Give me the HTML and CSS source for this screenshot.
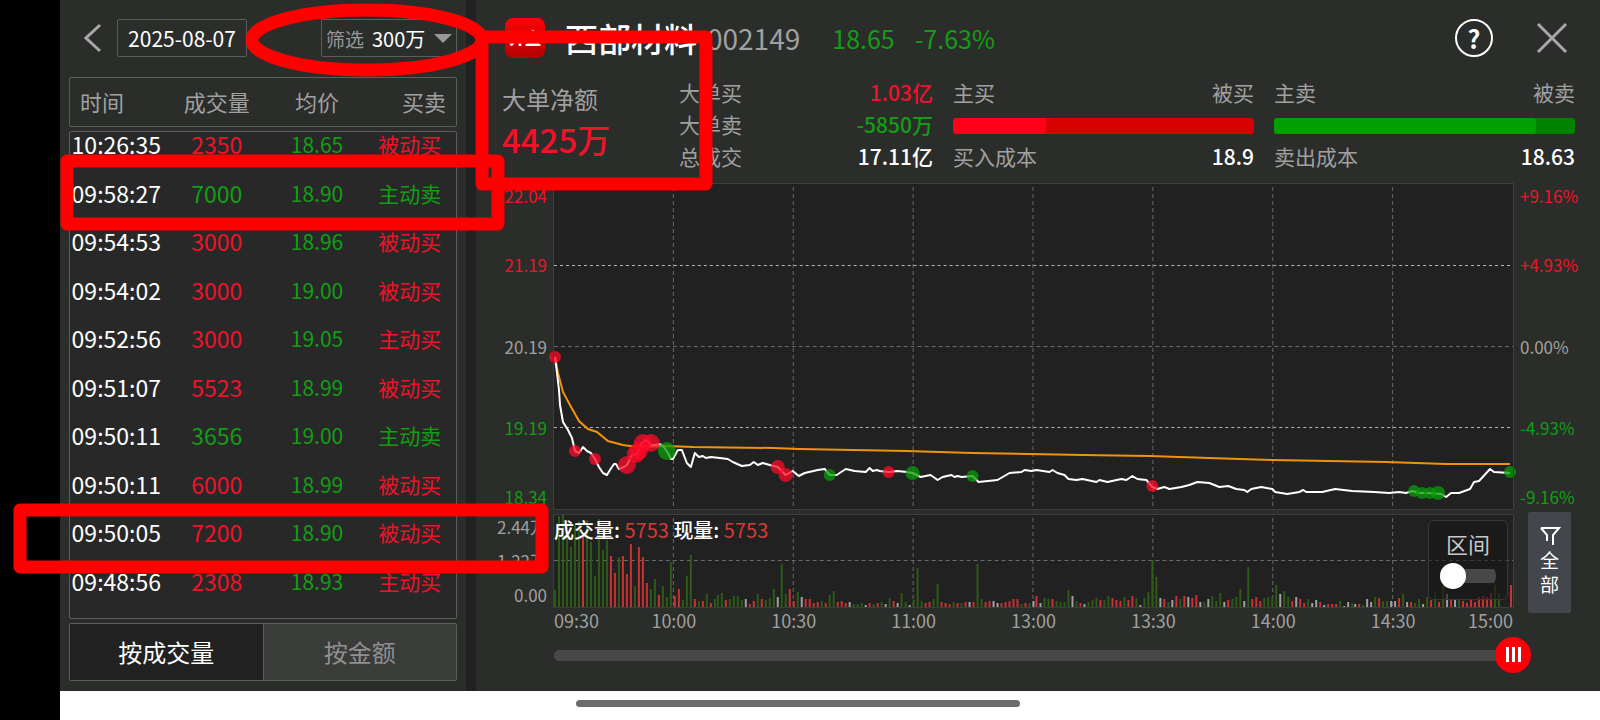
FILE: index.html
```html
<!DOCTYPE html>
<html lang="zh-CN">
<head>
    <meta charset="UTF-8">
    <meta name="viewport" content="width=device-width, initial-scale=1.0">
    <title>西部材料 002149</title>
    <link rel="stylesheet" href="styles.css">
</head>
<body>
    <div class="screen">
        <div class="app">
            <aside class="orders">
                <div class="toolbar">
                    <button class="icon-btn back" aria-label="返回">
                        <svg width="18" height="30" viewBox="0 0 18 30"><path d="M16 2L2 15l14 13"/></svg>
                    </button>
                    <button class="date">2025-08-07</button>
                    <div class="filter">
                        <label for="amount">筛选</label>
                        <select id="amount">
                            <option>300万</option>
                            <option>100万</option>
                        </select>
                        <span class="caret"></span>
                    </div>
                </div>

                <table class="trades">
                    <thead>
                        <tr><th>时间</th><th>成交量</th><th>均价</th><th>买卖</th></tr>
                    </thead>
                    <tbody>
                        <tr><td>10:26:35</td><td class="up">2350</td><td class="down">18.65</td><td class="up">被动买</td></tr>
                        <tr><td>09:58:27</td><td class="down">7000</td><td class="down">18.90</td><td class="down">主动卖</td></tr>
                        <tr><td>09:54:53</td><td class="up">3000</td><td class="down">18.96</td><td class="up">被动买</td></tr>
                        <tr><td>09:54:02</td><td class="up">3000</td><td class="down">19.00</td><td class="up">被动买</td></tr>
                        <tr><td>09:52:56</td><td class="up">3000</td><td class="down">19.05</td><td class="up">主动买</td></tr>
                        <tr><td>09:51:07</td><td class="up">5523</td><td class="down">18.99</td><td class="up">被动买</td></tr>
                        <tr><td>09:50:11</td><td class="down">3656</td><td class="down">19.00</td><td class="down">主动卖</td></tr>
                        <tr><td>09:50:11</td><td class="up">6000</td><td class="down">18.99</td><td class="up">被动买</td></tr>
                        <tr><td>09:50:05</td><td class="up">7200</td><td class="down">18.90</td><td class="up">被动买</td></tr>
                        <tr><td>09:48:56</td><td class="up">2308</td><td class="down">18.93</td><td class="up">主动买</td></tr>
                    </tbody>
                </table>

                <div class="tabs">
                    <button class="active">按成交量</button>
                    <button>按金额</button>
                </div>
            </aside>

            <main class="detail">
                <header class="title">
                    <span class="logo">开盘</span>
                    <h1>西部材料</h1>
                    <span class="code">002149</span>
                    <span class="quote down">18.65</span>
                    <span class="quote down">-7.63%</span>
                    <button class="icon-btn help" aria-label="帮助">?</button>
                    <button class="icon-btn close" aria-label="关闭">
                        <svg width="32" height="32" viewBox="0 0 32 32"><path d="M2 2l28 28M30 2L2 30"/></svg>
                    </button>
                </header>

                <section class="stats">
                    <div class="net">
                        <span>大单净额</span>
                        <strong class="up">4425万</strong>
                    </div>
                    <div class="group">
                        <p><span>大单买</span><b class="up">1.03亿</b></p>
                        <p><span>大单卖</span><b class="down">-5850万</b></p>
                        <p><span>总成交</span><b>17.11亿</b></p>
                    </div>
                    <div class="group">
                        <p><span>主买</span><span>被买</span></p>
                        <div class="ratio buy"><i style="width: 31%"></i></div>
                        <p><span>买入成本</span><b>18.9</b></p>
                    </div>
                    <div class="group">
                        <p><span>主卖</span><span>被卖</span></p>
                        <div class="ratio sell"><i style="width: 87%"></i></div>
                        <p><span>卖出成本</span><b>18.63</b></p>
                    </div>
                </section>

                <section class="chart">
                    <div class="axis price-axis">
                        <span class="up">22.04</span>
                        <span class="up">21.19</span>
                        <span>20.19</span>
                        <span class="down">19.19</span>
                        <span class="down">18.34</span>
                    </div>
                    <svg class="plot price" viewBox="0 0 960 325" preserveAspectRatio="none">
                        <path class="grid" d="M0 162.5H960M119.5 3V325M239.5 3V325M359.5 3V325M479.5 3V325M599.5 3V325M719.5 3V325M839.5 3V325"/>
                        <path class="grid bright" d="M0 81.5H960M0 243.5H960"/>
                        <path class="avg" d="M1 173L4 189L9 208L16 221L25 237L34 245L43 248L54 257L69 261L83 263L113 262L139 263L219 264L246 265L353 267L419 269L529 271L596 272L686 275L719 276L833 278L893 280L957 280"/>
                        <path class="line" d="M1 173L3 189L5 206L6 221L9 238L14 246L18 254L21 267L25 269L29 263L33 267L37 269L41 275L45 283L49 289L53 291L56 286L60 280L62 280L65 285L70 283L73 281L78 271L83 270L88 259L93 256L96 261L101 261L106 260L110 263L114 269L117 275L119 275L124 266L128 266L133 279L137 283L141 269L145 273L149 272L152 274L157 273L166 274L174 275L179 278L188 282L196 281L200 278L204 281L209 279L216 281L224 283L232 291L239 287L245 292L251 289L264 286L271 285L276 291L283 291L292 285L301 287L312 288L316 284L319 287L323 286L326 287L335 288L344 287L353 288L359 289L367 293L377 291L384 296L389 293L398 291L401 293L404 292L408 293L419 292L425 298L444 296L456 289L468 288L471 286L478 287L483 286L496 288L499 286L504 289L511 291L515 295L523 296L529 295L543 298L546 296L554 298L568 295L573 296L579 292L584 295L593 296L599 303L604 305L611 303L616 305L628 303L636 301L644 298L656 299L666 303L675 302L683 305L691 306L694 308L698 305L708 303L719 305L722 308L734 310L746 308L750 306L753 308L769 308L782 305L799 307L821 308L836 309L846 308L853 309L859 307L866 309L876 309L888 310L893 313L898 309L906 309L917 305L921 298L926 297L937 285L941 288L957 289"/>
                        <g class="dots buy-dots">
                            <circle cx="1" cy="173" r="6"/><circle cx="21" cy="267" r="6"/><circle cx="41" cy="275" r="6"/>
                            <circle cx="73" cy="281" r="9"/><circle cx="82" cy="270" r="9"/><circle cx="85" cy="267" r="9"/>
                            <circle cx="89" cy="259" r="9"/><circle cx="97" cy="259" r="9"/><circle cx="224" cy="283" r="7"/>
                            <circle cx="232" cy="291" r="7"/><circle cx="335" cy="288" r="6"/><circle cx="599" cy="302" r="6"/>
                        </g>
                        <g class="dots sell-dots">
                            <circle cx="113" cy="267" r="9"/><circle cx="276" cy="291" r="6"/><circle cx="359" cy="289" r="7"/>
                            <circle cx="419" cy="292" r="6"/><circle cx="861" cy="307" r="6"/><circle cx="869" cy="309" r="6"/>
                            <circle cx="877" cy="309" r="6"/><circle cx="885" cy="309" r="7"/><circle cx="957" cy="288" r="6"/>
                        </g>
                    </svg>
                    <div class="axis price-axis rate-axis">
                        <span class="up">+9.16%</span>
                        <span class="up">+4.93%</span>
                        <span>0.00%</span>
                        <span class="down">-4.93%</span>
                        <span class="down">-9.16%</span>
                    </div>

                    <div class="axis volume-axis">
                        <span>2.44万</span>
                        <span>1.22万</span>
                        <span>0.00</span>
                    </div>
                    <div class="volume">
                        <svg class="plot" viewBox="0 0 960 92" preserveAspectRatio="none">
                            <path class="grid" d="M0 45.5H960M119.5 3V92M239.5 3V92M359.5 3V92M479.5 3V92M599.5 3V92M719.5 3V92M839.5 3V92"/>
                            <g id="bars"></g>
                        </svg>
                        <p class="legend">成交量: <span>5753</span> 现量: <span>5753</span></p>
                        <div class="range-box">
                            <label for="range">区间</label>
                            <input type="checkbox" id="range">
                        </div>
                    </div>
                    <button class="all">
                        <svg width="22" height="20" viewBox="0 0 22 20"><path d="M2 2h18l-6 7v10M2 2l6 7v6"/></svg>
                        <span>全</span>
                        <span>部</span>
                    </button>

                    <div class="times">
                        <span>09:30</span><span>10:00</span><span>10:30</span><span>11:00</span><span>13:00</span><span>13:30</span><span>14:00</span><span>14:30</span><span>15:00</span>
                    </div>
                    <input class="slider" type="range" min="0" max="240" value="240" aria-label="时间">
                </section>
            </main>
        </div>
        <footer class="home"><span></span></footer>
    </div>

    <svg class="marks" width="760" height="620">
        <ellipse cx="367" cy="40" rx="115" ry="30"/>
        <rect x="482" y="37" width="224" height="147"/>
        <rect x="67" y="161" width="431" height="63"/>
        <rect x="20" y="510" width="522" height="57"/>
    </svg>

    <script>
        // 每分钟成交量: 颜色 (r 涨 / g 跌 / w 平) + 高度
        const volumes = `
            g17 g91 g92 g83 g60 g82 g86 r72 g87 g65 g31 g88 g57 g67 r51 r34 g50 r51 r33 r63
            g21 r60 r50 r24 g18 g28 r12 g21 g10 g45 r11 r18 g7 g31 g52 r8 g6 r6 g13 r4
            g8 g12 g14 r7 g8 g11 g11 g7 w8 r3 r6 g13 r8 g7 g9 g18 w10 g43 g13 r18
            r6 g15 w10 r8 r8 r4 r5 g6 r4 g12 g16 r5 r6 r4 w5 g3 g3 g4 w2 r4
            g3 r4 g5 w3 g9 r6 w4 g14 g5 w2 g7 g39 g6 r4 r5 g8 g23 r5 r4 r3
            g5 r4 g4 r5 w5 r5 g43 g8 r5 r6 w6 w4 r4 r5 r6 r8 r8 g3 r4 g4
            w6 r11 w4 g9 g8 r8 g6 g5 g5 g17 w11 g6 r4 w3 g5 g7 g9 r7 g7 g11
            r9 r7 r6 g10 r7 r11 g9 w2 g9 g15 g47 g30 w9 r8 g5 w7 r11 g8 r11 w10
            r9 r12 w5 g5 w8 g11 g6 g14 w5 r7 g8 g10 g18 w6 g40 r8 r10 r6 g9 g10
            g10 g22 w13 g16 g10 r6 w10 r8 r4 g8 w4 w7 r5 w2 r3 r3 r3 g6 w1 w5
            g4 w3 r3 g2 w8 w5 g10 r9 g6 g6 w6 w6 r9 g13 w5 r5 g4 g8 w3 g10
            r7 g15 r5 g21 w13 r8 w7 g8 r6 r4 r7 r5 r10 r11 r10 r14 g22 g14 w0 w0
            r22`.trim().split(/\s+/);

        const colors = { r: '#c83232', g: '#2d5a16', w: '#a0a0a0' };
        const bars = document.getElementById('bars');

        volumes.forEach((item, index) => {
            const height = Number(item.slice(1));
            const bar = document.createElementNS('http://www.w3.org/2000/svg', 'rect');
            bar.setAttribute('x', Math.round(index * 957 / 240));
            bar.setAttribute('y', 92 - height);
            bar.setAttribute('width', 2);
            bar.setAttribute('height', height);
            bar.setAttribute('fill', colors[item[0]]);
            bars.appendChild(bar);
        });
    </script>
</body>
</html>
```
FILE: styles.css
```css
* {
    box-sizing: border-box;
}

body {
    margin: 0;
    padding-left: 60px;
    background: #000;
    color: #fff;
    font-family: "Noto Sans CJK SC", sans-serif;
}

button, select, input {
    font-family: inherit;
    color: inherit;
    margin: 0;
    padding: 0;
    border: none;
    background: none;
}

h1, p {
    margin: 0;
}

.up {
    color: #f01229;
}

.down {
    color: #129e14;
}

.screen {
    display: flex;
    flex-direction: column;
    min-height: 100vh;
}

.app {
    display: flex;
    flex: 1;
    background: #2b2d2a;
}

/* 左侧成交列表 */
.orders {
    display: flex;
    flex-direction: column;
    gap: 4px;
    width: 416px;
    padding: 19px 9px 10px;
    border-right: 10px solid #212121;
}

.toolbar {
    display: flex;
    align-items: center;
    height: 38px;
    margin-bottom: 16px;
}

.icon-btn {
    display: flex;
    align-items: center;
    justify-content: center;
}

.icon-btn svg {
    fill: none;
    stroke: #a8a8a8;
    stroke-width: 3;
}

.back {
    width: 48px;
}

.date {
    width: 130px;
    height: 38px;
    font-size: 21px;
    line-height: 36px;
    border: 1px solid #5c5e5c;
    border-radius: 2px;
}

.filter {
    display: flex;
    align-items: center;
    gap: 8px;
    height: 38px;
    margin-left: auto;
    padding: 0 4px;
    border: 1px solid #5c5e5c;
    border-radius: 2px;
    color: #989898;
    font-size: 19px;
}

.filter select {
    appearance: none;
    width: 56px;
    font-size: 20px;
    color: #fff;
}

.caret {
    margin-left: -2px;
    border: 9px solid transparent;
    border-top-color: #989898;
    border-bottom: none;
}

.trades {
    display: flex;
    flex: 1;
    flex-direction: column;
    gap: 4px;
    min-height: 0;
    font-size: 23px;
}

.trades thead, .trades tbody {
    display: block;
    border: 1px solid #5c5e5c;
    border-radius: 2px;
}

.trades tr {
    display: grid;
    grid-template-columns: 24fr 28fr 24fr 24fr;
    align-items: center;
    height: 48px;
}

.trades th, .trades td {
    padding: 0;
    text-align: center;
    font-weight: 400;
    line-height: 30px;
    white-space: nowrap;
}

.trades th {
    padding-bottom: 2px;
    font-size: 22px;
    color: #a0a0a0;
}

.trades th:first-child {
    padding-left: 10px;
    text-align: left;
}

.trades th:last-child {
    padding-right: 10px;
    text-align: right;
}

/* 列表滚动到底部, 首行被裁掉一部分 */
.trades tbody {
    display: flex;
    flex: 1 1 0;
    flex-direction: column;
    justify-content: flex-end;
    height: 0;
    min-height: 0;
    padding-bottom: 13px;
    overflow: hidden;
    background: #282828;
}

.trades tbody tr {
    flex: none;
}

.trades tbody tr:nth-child(even) {
    height: 49px;
}

.trades td:nth-child(3), .trades td:last-child {
    font-size: 21px;
}

.tabs {
    display: flex;
    height: 58px;
    border: 1px solid #5c5e5c;
    border-radius: 2px;
}

.tabs button {
    flex: 1;
    padding-bottom: 2px;
    font-size: 24px;
    color: #909090;
    background: #3a3c39;
}

.tabs .active {
    color: #fff;
    background: #212121;
    border-right: 1px solid #5c5e5c;
}

/* 右侧详情 */
.detail {
    flex: 1;
    min-width: 0;
}

.title {
    display: flex;
    align-items: center;
    height: 76px;
    padding: 0 32px 0 29px;
}

.logo {
    width: 40px;
    height: 40px;
    border-radius: 8px;
    background: linear-gradient(#fa0505, #b40000);
    font-size: 16px;
    font-weight: 900;
    line-height: 38px;
    text-align: center;
}

.title h1 {
    margin-left: 20px;
    font-size: 33px;
    font-weight: 500;
    line-height: 48px;
}

.code {
    margin: 0 32px 0 10px;
    font-size: 28px;
    color: #a0a0a0;
}

.quote {
    margin-right: 20px;
    font-size: 25px;
}

.help {
    width: 38px;
    height: 38px;
    margin-left: auto;
    border: 2px solid #fff;
    border-radius: 50%;
    font-size: 25px;
    font-weight: 700;
    line-height: 30px;
}

.close {
    margin-left: 43px;
}

.stats {
    display: grid;
    grid-template-columns: 157fr 254fr 301fr 301fr;
    gap: 20px;
    height: 108px;
    padding: 0 25px 0 26px;
    font-size: 21px;
    line-height: 32px;
    color: #a0a0a0;
}

.net {
    display: flex;
    flex-direction: column;
    padding-top: 2px;
    font-size: 24px;
    line-height: 41px;
}

.net strong {
    font-size: 33px;
    font-weight: 500;
}

.group p {
    display: flex;
    justify-content: space-between;
}

.group b {
    font-weight: 500;
}

.group b:not([class]) {
    color: #fff;
}

.ratio {
    height: 16px;
    margin: 10px 0 6px;
    border-radius: 3px;
    overflow: hidden;
}

.ratio i {
    display: block;
    height: 100%;
    border-radius: 3px;
}

.buy {
    background: #d60000;
}

.buy i {
    background: #ff0019;
}

.sell {
    background: #008200;
}

.sell i {
    background: #00a000;
}

/* 分时图 */
.chart {
    display: grid;
    grid-template-columns: 78px 1fr 87px;
    grid-template-rows: 325px 6px 92px;
}

.axis {
    padding-right: 7px;
    font-size: 17px;
    line-height: 24px;
    color: #a0a0a0;
    text-align: right;
}

.price-axis {
    display: grid;
    grid-template-rows: 1fr 2fr 2fr 2fr 1fr;
    align-items: center;
}

.price-axis span:first-child {
    align-self: start;
}

.price-axis span:last-child {
    align-self: end;
}

.rate-axis {
    padding: 0 0 0 7px;
    text-align: left;
}

.volume-axis {
    display: flex;
    flex-direction: column;
    justify-content: space-between;
    grid-row: 3;
}

.plot {
    display: block;
    width: 100%;
    height: 100%;
    background: #212121;
    outline: 1px solid #3c3e3c;
    overflow: visible;
}

.plot path {
    fill: none;
}

.grid {
    stroke: #6a6a6a;
    stroke-dasharray: 4 3;
}

.plot .bright {
    stroke: #b4b4b4;
    stroke-dasharray: 3 3;
}

.avg {
    stroke: #f0920f;
    stroke-width: 2;
}

.line {
    stroke: #fff;
    stroke-width: 2;
    stroke-linejoin: round;
}

.dots circle {
    opacity: 0.75;
}

.buy-dots {
    fill: #ff0a28;
}

.sell-dots {
    fill: #0a9b0a;
}

.volume {
    position: relative;
    grid-row: 3;
    grid-column: 2;
}

.legend {
    position: absolute;
    top: 0;
    left: 0;
    font-size: 20px;
    font-weight: 500;
    line-height: 30px;
}

.legend span {
    font-weight: 400;
    color: #d23c37;
}

.range-box {
    position: absolute;
    top: 5px;
    right: 5px;
    display: flex;
    flex-direction: column;
    align-items: center;
    width: 80px;
    height: 80px;
    padding-top: 7px;
    border: 1px solid #383838;
    border-radius: 6px;
    background: rgba(22, 22, 22, 0.6);
    font-size: 22px;
    line-height: 30px;
    color: #c8c8c8;
}

.range-box input {
    display: flex;
    align-items: center;
    appearance: none;
    width: 56px;
    height: 26px;
    margin-top: 5px;
    background: linear-gradient(#484848, #484848) center / 100% 14px no-repeat;
    border-radius: 13px;
}

.range-box input::before {
    content: "";
    width: 26px;
    height: 26px;
    border-radius: 50%;
    background: #fff;
}

.all {
    display: flex;
    flex-direction: column;
    align-items: center;
    grid-row: 2 / 5;
    grid-column: 3;
    width: 43px;
    height: 101px;
    margin: 3px 0 0 15px;
    padding-top: 14px;
    border-radius: 2px;
    background: #43464b;
    font-size: 19px;
    line-height: 24px;
}

.all svg {
    margin-bottom: 2px;
    fill: none;
    stroke: #fff;
    stroke-width: 2;
}

.times {
    display: grid;
    grid-template-columns: 1fr repeat(7, 2fr) 1fr;
    grid-row: 4;
    grid-column: 2;
    font-size: 18px;
    line-height: 26px;
    color: #a0a0a0;
    text-align: center;
}

.times span:first-child {
    text-align: left;
}

.times span:last-child {
    justify-self: end;
}

.slider {
    appearance: none;
    grid-row: 5;
    grid-column: 2;
    width: calc(100% + 18px);
    height: 36px;
    margin-top: 4px;
}

.slider::-webkit-slider-runnable-track {
    height: 11px;
    border-radius: 6px;
    background: linear-gradient(to right, #484848 calc(100% - 18px), transparent 0);
}

.slider::-webkit-slider-thumb {
    appearance: none;
    width: 36px;
    height: 36px;
    margin-top: -13px;
    border-radius: 50%;
    background:
        linear-gradient(to right, #fff 3px, transparent 3px 6px, #fff 6px 9px, transparent 9px 12px, #fff 12px) center / 15px 15px no-repeat,
        #fb0007;
}

/* 底部手势条 */
.home {
    display: flex;
    justify-content: center;
    height: 29px;
    padding: 9px 64px 0 0;
    background: #fff;
}

.home span {
    width: 444px;
    height: 7px;
    border-radius: 4px;
    background: #6c6b6e;
}

/* 红色标注 */
.marks {
    position: absolute;
    top: 0;
    left: 0;
    fill: none;
    stroke: #f00;
    stroke-width: 13;
    stroke-linejoin: round;
    pointer-events: none;
}
```
